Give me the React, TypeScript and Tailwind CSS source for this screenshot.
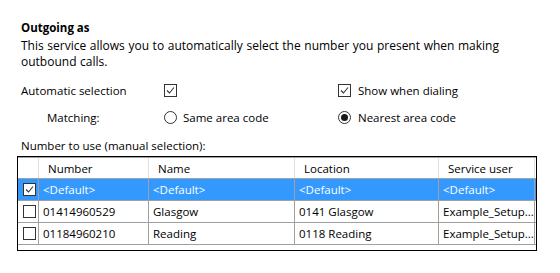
import React from "react";

const Check = ({ bg = "bg-white" }: { bg?: string }) => (
  <div className={`w-[13px] h-[13px] border border-[#333333] ${bg} flex items-center justify-center`}>
    <svg width="11" height="11" viewBox="0 0 11 11">
      <path d="M2 5.5 L4.5 8 L9 2.5" fill="none" stroke="#333333" strokeWidth="1.1" />
    </svg>
  </div>
);

const Box = () => <div className="w-[13px] h-[13px] border border-[#333333] bg-white" />;

const Radio = ({ on }: { on?: boolean }) => (
  <div className="w-[13px] h-[13px] rounded-full border border-[#333333] bg-white flex items-center justify-center">
    {on && <div className="w-[7px] h-[7px] rounded-full bg-[#1a1a1a]" />}
  </div>
);

const cols = [
  "w-[21px]",
  "w-[110px]",
  "w-[146px]",
  "w-[144px]",
  "w-[96px]",
];

type Row = { checked: boolean; sel: boolean; cells: string[] };

const rows: Row[] = [
  { checked: true, sel: true, cells: ["<Default>", "<Default>", "<Default>", "<Default>"] },
  { checked: false, sel: false, cells: ["01414960529", "Glasgow", "0141 Glasgow", "Example_Setup..."] },
  { checked: false, sel: false, cells: ["01184960210", "Reading", "0118 Reading", "Example_Setup..."] },
];

export default function App() {
  return (
    <div
      className="w-[560px] h-[273px] bg-white text-black text-[11.5px] leading-[15px] overflow-hidden"
      style={{ fontFamily: '"Open Sans", "Noto Sans", sans-serif' }}
    >
      <div className="pt-[20px] pl-[21px]">
        <div className="font-bold h-[15px]">Outgoing as</div>
        <div className="mt-[3px] text-[12px] leading-[16px] [word-spacing:0.5px] whitespace-nowrap">
          This service allows you to automatically select the number you present when making
          <br />
          outbound calls.
        </div>
        <div className="mt-[13px] flex items-center h-[15px]">
          <div className="w-[143px]">Automatic selection</div>
          <div className="w-[174px]">
            <Check />
          </div>
          <div className="flex items-center gap-[7px]">
            <Check />
            <span>Show when dialing</span>
          </div>
        </div>
        <div className="mt-[12px] flex items-center h-[15px]">
          <div className="w-[143px] pl-[26px]">Matching:</div>
          <div className="w-[174px] flex items-center gap-[6px]">
            <Radio />
            <span>Same area code</span>
          </div>
          <div className="flex items-center gap-[7px]">
            <Radio on />
            <span>Nearest area code</span>
          </div>
        </div>
        <div className="mt-[13px] h-[15px]">Number to use (manual selection):</div>
      </div>
      <div className="ml-[17px] mt-[3px] w-[520px] h-[95px] border border-black">
        <div className="border-t border-[#a0a0a0] flex h-[22px] border-b">
          {["", "Number", "Name", "Location", "Service user"].map((h, i) => (
            <div
              key={i}
              className={`${cols[i]} h-full border-r border-[#e0e0e0] flex items-center pl-[9px] ${i === 4 ? "border-[#a0a0a0]" : ""}`}
            >
              {h}
            </div>
          ))}
        </div>
        {rows.map((r, ri) => (
          <div
            key={ri}
            className={`flex h-[22px] border-b border-[#a0a0a0] ${r.sel ? "bg-[#3399ff] text-white" : ""}`}
          >
            <div className={`${cols[0]} h-full border-r border-[#a0a0a0] flex items-center pl-[5px]`}>
              {r.checked ? <Check /> : <Box />}
            </div>
            {r.cells.map((c, ci) => (
              <div
                key={ci}
                className={`${cols[ci + 1]} h-full border-r border-[#a0a0a0] flex items-center pl-[4px] whitespace-nowrap overflow-hidden`}
              >
                {c}
              </div>
            ))}
          </div>
        ))}
      </div>
    </div>
  );
}
